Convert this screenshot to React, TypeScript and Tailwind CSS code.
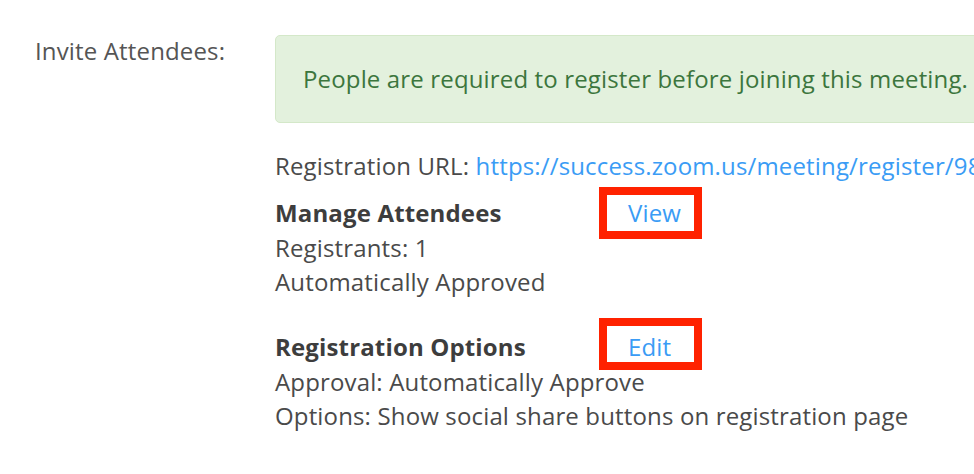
import React from 'react';

const Boxed = ({ label, lift = false }: { label: string; lift?: boolean }) => (
  <span
    className={`relative -my-2 box-border flex h-[52px] w-[103px] items-center border-[8px] border-[#ff2200] pl-[21px] text-[#3a9cf5] ${
      lift ? '-top-[3px]' : ''
    }`}
  >
    <span className={lift ? 'relative top-[3px]' : ''}>{label}</span>
  </span>
);

export default function App() {
  return (
    <div className="flex h-[474px] w-[974px] overflow-hidden bg-white font-['Open_Sans',sans-serif] text-[24px] leading-[34px] tracking-[0.15px] text-[#4a4a4a]">
      {/* Label column */}
      <div className="w-[275px] shrink-0 pl-[35px] pt-[34px] text-[#555]">Invite Attendees:</div>

      {/* Content column */}
      <div className="flex min-w-0 flex-1 flex-col pt-[35px]">
        <div className="w-[740px] shrink-0 whitespace-nowrap rounded-l-[5px] border border-[#d4e8c9] bg-[#e3f1dd] py-[26px] pl-[27px] text-[#3c763d]">
          People are required to register before joining this meeting.
        </div>

        <div className="mt-[26px] overflow-hidden whitespace-nowrap">
          Registration URL:{' '}
          <span className="text-[#3a9cf5]">https://success.zoom.us/meeting/register/98</span>
        </div>

        <div className="mt-[12px] flex items-center">
          <span className="w-[324px] font-bold text-[#3d3d3d]">Manage Attendees</span>
          <Boxed label="View" />
        </div>
        <div>Registrants: 1</div>
        <div>Automatically Approved</div>

        <div className="mt-[30px] flex items-center">
          <span className="w-[324px] font-bold text-[#3d3d3d]">Registration Options</span>
          <Boxed label="Edit" lift />
        </div>
        <div>Approval: Automatically Approve</div>
        <div className="whitespace-nowrap">Options: Show social share buttons on registration page</div>
      </div>
    </div>
  );
}
